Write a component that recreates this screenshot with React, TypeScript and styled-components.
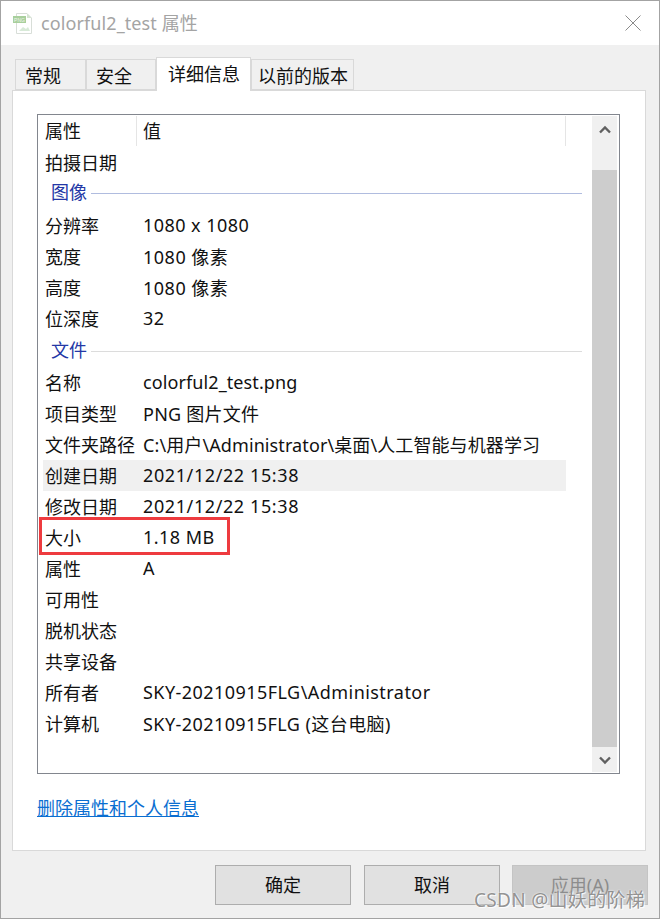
import React from "react";
import styled, { createGlobalStyle } from "styled-components";

const Global = createGlobalStyle`
  html, body { margin: 0; padding: 0; background: #f0f0f0; }
  * { box-sizing: border-box; }
  body { font-family: "Noto Sans", "Noto Sans CJK SC", sans-serif; }
`;

const FONT = `"Noto Sans", "Noto Sans CJK SC", sans-serif`;

const Window = styled.div`
  position: relative;
  width: 660px;
  height: 919px;
  display: flex;
  flex-direction: column;
  background: #f0f0f0;
  border: 1px solid #a3a3a3;
  font-family: ${FONT};
  font-size: 18px;
  color: #111;
  overflow: hidden;
`;

const TitleBar = styled.div`
  height: 44px;
  flex: none;
  background: #fff;
  display: flex;
  align-items: center;
  padding-left: 11px;
  gap: 8px;
`;

const TitleText = styled.div`
  color: #a4a4a4;
  font-size: 18px;
  letter-spacing: 0.1px;
  line-height: 44px;
  flex: 1;
`;

const CloseButton = styled.div`
  width: 16px;
  height: 16px;
  margin-right: 18px;
  display: flex;
`;

const TabStrip = styled.div`
  display: flex;
  align-items: flex-end;
  height: 33px;
  margin: 12px 0 0 14px;
  position: relative;
  z-index: 1;
`;

const Tab = styled.div<{ $w: number; $pad: number; $active?: boolean }>`
  width: ${(p) => p.$w}px;
  height: ${(p) => (p.$active ? 34 : 31)}px;
  margin-bottom: ${(p) => (p.$active ? -1 : 0)}px;
  background: ${(p) => (p.$active ? "#fff" : "#f0f0f0")};
  border: 1px solid #d9d9d9;
  border-bottom: ${(p) => (p.$active ? "none" : "1px solid #d9d9d9")};
  display: flex;
  align-items: center;
  white-space: nowrap;
  font-size: 18px;
  line-height: 30px;
  padding-left: ${(p) => p.$pad}px;
  padding-top: ${(p) => (p.$active ? 0 : 3)}px;
  padding-bottom: ${(p) => (p.$active ? 2 : 0)}px;
`;

const Panel = styled.div`
  width: 634px;
  height: 761px;
  margin-left: 11px;
  background: #fff;
  border: 1px solid #d9d9d9;
  padding: 23px 25px 0 24px;
  display: flex;
  flex-direction: column;
`;

const ListBox = styled.div`
  height: 660px;
  flex: none;
  border: 1px solid #82868e;
  display: flex;
  padding: 1px;
`;

const ListBody = styled.div`
  flex: 1;
  display: flex;
  flex-direction: column;
  padding-left: 4px;
  min-width: 0;
`;

const HeaderRow = styled.div`
  height: 30px;
  width: 523px;
  display: flex;
  align-items: center;
  margin-bottom: 1px;
`;

const HeaderCell = styled.div<{ $w: number }>`
  width: ${(p) => p.$w}px;
  height: 30px;
  line-height: 30px;
  border-right: 1px solid #e5e5e5;
  padding-left: ${(p) => (p.$w > 100 ? 6 : 2)}px;
  font-size: 18px;
`;

const Row = styled.div<{ $selected?: boolean }>`
  position: relative;
  height: 31px;
  width: 523px;
  display: flex;
  align-items: center;
  padding-bottom: 2px;
  background: ${(p) => (p.$selected ? "#f0f0f0" : "transparent")};
  white-space: nowrap;
`;

const Name = styled.div`
  width: 100px;
  padding-left: 2px;
  flex: none;
`;

const Value = styled.div<{ $track: number }>`
  flex: 1;
  font-size: 18px;
  letter-spacing: ${(p) => p.$track}px;
`;

const GroupRow = styled.div<{ $gapTop: number; $line: string }>`
  height: 31px;
  margin-top: ${(p) => p.$gapTop}px;
  margin-bottom: ${(p) => (p.$gapTop === 0 ? 1 : 0)}px;
  width: 539px;
  display: flex;
  align-items: center;
  padding-left: 8px;
  gap: 4px;
  color: #2438a6;
  line-height: 27px;
  & > span {
    margin-bottom: 2px;
  }
  &::after {
    content: "";
    flex: 1;
    height: 1px;
    background: ${(p) => p.$line};
  }
`;

const Highlight = styled.div`
  position: absolute;
  left: -4px;
  top: -5px;
  width: 191px;
  height: 38px;
  border: 3px solid #ee3b3f;
  pointer-events: none;
`;

const ScrollBar = styled.div`
  width: 25px;
  flex: none;
  margin-right: 1px;
  background: #f0f0f0;
  display: flex;
  flex-direction: column;
`;

const ScrollEnd = styled.div<{ $h: number }>`
  height: ${(p) => p.$h}px;
  flex: none;
  display: flex;
  justify-content: center;
  padding-top: 9px;
`;

const ScrollThumb = styled.div`
  flex: 1;
  background: #cdcdcd;
`;

const LinkLine = styled.div`
  margin-top: 23px;
  height: 22px;
  display: flex;
  align-items: center;
`;

const RemoveLink = styled.a`
  color: #0a6ed1;
  text-decoration: underline;
  font-size: 18px;
  line-height: 22px;
  cursor: pointer;
`;

const Footer = styled.div`
  display: flex;
  justify-content: flex-end;
  gap: 13px;
  padding: 14px 11px 0 0;
`;

const DialogButton = styled.div<{ $disabled?: boolean }>`
  width: 136px;
  height: 40px;
  display: flex;
  align-items: center;
  justify-content: center;
  padding-bottom: 2px;
  margin-left: ${(p) => (p.$disabled ? -1 : 0)}px;
  background: ${(p) => (p.$disabled ? "#cccccc" : "#e1e1e1")};
  border: 1.5px solid ${(p) => (p.$disabled ? "#c4c4c4" : "#adadad")};
  color: ${(p) => (p.$disabled ? "#8c8c8c" : "#111")};
  font-size: 18px;
`;

const Watermark = styled.div`
  position: absolute;
  left: 473px;
  top: 888px;
  font-size: 19px;
  letter-spacing: 0.3px;
  line-height: 22px;
  white-space: nowrap;
  color: rgba(120, 120, 120, 0.8);
  text-shadow: 0 0 2px #fff, 1px 1px 1px #fff;
`;

const FileIcon = () => (
  <svg width="21" height="23" viewBox="0 0 21 23" fill="none">
    <path d="M4.5 1.5 H15 L19.5 6 V21.5 H4.5 Z" fill="#fff" stroke="#d8ded8" />
    <path d="M15 1.5 V6 H19.5 Z" fill="#d4e4d0" />
    <rect x="1" y="4" width="13" height="7" fill="#a8cf9c" />
    <text x="7.5" y="9.6" fontSize="5" textAnchor="middle" fill="#f0f6ee" fontFamily="Liberation Sans">PNG</text>
    <path d="M7 19 L11 15 L14 17 L16 15 L18 19 Z" fill="#d8ead8" />
  </svg>
);

const CloseIcon = () => (
  <svg width="16" height="16" viewBox="0 0 16 16">
    <path d="M0.5 0.5 L15.5 15.5 M15.5 0.5 L0.5 15.5" stroke="#8a8a8a" strokeWidth="1" fill="none" />
  </svg>
);

const Chevron = ({ up }: { up?: boolean }) => (
  <svg width="12" height="9" viewBox="0 0 12 9">
    <path
      d={up ? "M1 7.5 L6 2.5 L11 7.5" : "M1 1.5 L6 6.5 L11 1.5"}
      stroke="#606060"
      strokeWidth="2.4"
      fill="none"
    />
  </svg>
);

const imageRows: [string, string, number][] = [
  ["分辨率", "1080 x 1080", 0.45],
  ["宽度", "1080 像素", 0.5],
  ["高度", "1080 像素", 0.5],
  ["位深度", "32", 0.45],
];

const fileRows: [string, string, number][] = [
  ["名称", "colorful2_test.png", 0.1],
  ["项目类型", "PNG 图片文件", 0.25],
  ["文件夹路径", "C:\\用户\\Administrator\\桌面\\人工智能与机器学习", 0.1],
  ["创建日期", "2021/12/22 15:38", 0.6],
  ["修改日期", "2021/12/22 15:38", 0.6],
  ["大小", "1.18 MB", 0.45],
  ["属性", "A", 0],
  ["可用性", "", 0],
  ["脱机状态", "", 0],
  ["共享设备", "", 0],
  ["所有者", "SKY-20210915FLG\\Administrator", 0.45],
  ["计算机", "SKY-20210915FLG (这台电脑)", 0.43],
];

export default function App() {
  return (
    <>
      <Global />
      <Window>
        <TitleBar>
          <FileIcon />
          <TitleText>colorful2_test 属性</TitleText>
          <CloseButton>
            <CloseIcon />
          </CloseButton>
        </TitleBar>
        <TabStrip>
          <Tab $w={71} $pad={9}>常规</Tab>
          <Tab $w={70} $pad={9}>安全</Tab>
          <Tab $w={95} $pad={11} $active>详细信息</Tab>
          <Tab $w={103} $pad={6}>以前的版本</Tab>
        </TabStrip>
        <Panel>
          <ListBox>
            <ListBody>
              <HeaderRow>
                <HeaderCell $w={94}>属性</HeaderCell>
                <HeaderCell $w={429}>值</HeaderCell>
              </HeaderRow>
              <Row>
                <Name>拍摄日期</Name>
              </Row>
              <GroupRow $gapTop={0} $line="#b0bcdf"><span>图像</span></GroupRow>
              {imageRows.map(([n, v, t]) => (
                <Row key={n}>
                  <Name>{n}</Name>
                  <Value $track={t}>{v}</Value>
                </Row>
              ))}
              <GroupRow $gapTop={2} $line="#dcdcdc"><span>文件</span></GroupRow>
              {fileRows.map(([n, v, t]) => (
                <Row key={n} $selected={n === "创建日期"}>
                  <Name>{n}</Name>
                  <Value $track={t}>{v}</Value>
                  {n === "大小" && <Highlight />}
                </Row>
              ))}
            </ListBody>
            <ScrollBar>
              <ScrollEnd $h={54}>
                <Chevron up />
              </ScrollEnd>
              <ScrollThumb />
              <ScrollEnd $h={25}>
                <Chevron />
              </ScrollEnd>
            </ScrollBar>
          </ListBox>
          <LinkLine>
            <RemoveLink>删除属性和个人信息</RemoveLink>
          </LinkLine>
        </Panel>
        <Footer>
          <DialogButton>确定</DialogButton>
          <DialogButton>取消</DialogButton>
          <DialogButton $disabled>应用(A)</DialogButton>
        </Footer>
        <Watermark>CSDN @山妖的阶梯</Watermark>
      </Window>
    </>
  );
}
